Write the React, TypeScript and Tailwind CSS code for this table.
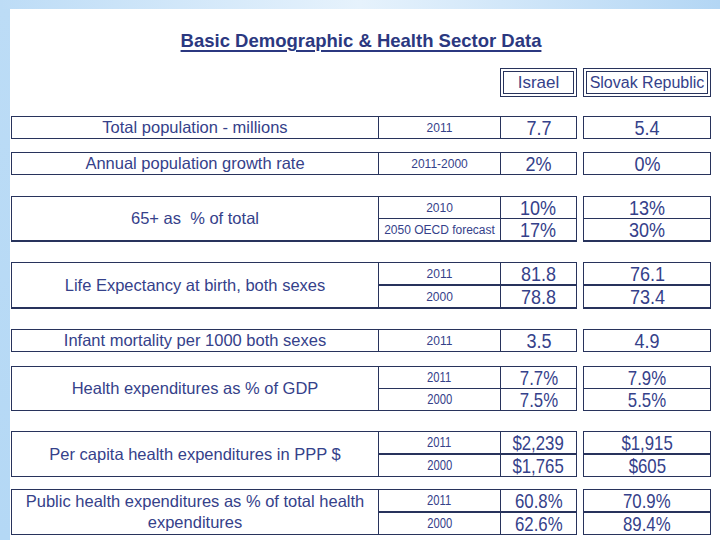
import React from 'react'

interface SubRow {
  year: string
  il: string
  sk: string
}

interface Group {
  label: React.ReactNode
  gap: string
  rows: SubRow[]
  split?: 'thin' | 'thick'
  bottom?: string
  condensed?: boolean
}

const groups: Group[] = [
  {
    label: 'Total population - millions',
    gap: 'mt-[19px]',
    rows: [{ year: '2011', il: '7.7', sk: '5.4' }]
  },
  {
    label: 'Annual population growth rate',
    gap: 'mt-[13px]',
    rows: [{ year: '2011-2000', il: '2%', sk: '0%' }]
  },
  {
    label: '65+ as  % of total',
    gap: 'mt-[21px]',
    split: 'thin',
    bottom: 'border-b-2',
    rows: [
      { year: '2010', il: '10%', sk: '13%' },
      { year: '2050 OECD forecast', il: '17%', sk: '30%' }
    ]
  },
  {
    label: 'Life Expectancy at birth, both sexes',
    gap: 'mt-[20px]',
    split: 'thick',
    bottom: 'border-b-2',
    rows: [
      { year: '2011', il: '81.8', sk: '76.1' },
      { year: '2000', il: '78.8', sk: '73.4' }
    ]
  },
  {
    label: 'Infant mortality per 1000 both sexes',
    gap: 'mt-[20px]',
    rows: [{ year: '2011', il: '3.5', sk: '4.9' }]
  },
  {
    label: 'Health expenditures as % of GDP',
    gap: 'mt-[14px]',
    split: 'thin',
    condensed: true,
    rows: [
      { year: '2011', il: '7.7%', sk: '7.9%' },
      { year: '2000', il: '7.5%', sk: '5.5%' }
    ]
  },
  {
    label: 'Per capita health expenditures in PPP $',
    gap: 'mt-[20px]',
    split: 'thick',
    condensed: true,
    rows: [
      { year: '2011', il: '$2,239', sk: '$1,915' },
      { year: '2000', il: '$1,765', sk: '$605' }
    ]
  },
  {
    label: (
      <>
        Public health expenditures as % of total health
        <br />
        expenditures
      </>
    ),
    gap: 'mt-[12px]',
    split: 'thick',
    condensed: true,
    rows: [
      { year: '2011', il: '60.8%', sk: '70.9%' },
      { year: '2000', il: '62.6%', sk: '89.4%' }
    ]
  }
]

const line = 'border-[#28335c]'

function rowClass(g: Group, i: number) {
  if (i === 0) return 'h-[21px]'
  return g.split === 'thick' ? `h-[23px] border-t-2 ${line}` : `h-[22px] border-t ${line}`
}

function Value({ v, condensed }: { v: string; condensed?: boolean }) {
  return (
    <span className={`inline-block ${condensed ? 'text-[21px] scale-x-[0.8]' : 'text-[20px] scale-x-[0.9]'}`}>
      {v}
    </span>
  )
}

function DataGroup({ g }: { g: Group }) {
  return (
    <div className={`flex ${g.gap}`}>
      <div className={`flex w-[566px] border ${g.bottom ?? ''} ${line}`}>
        <div className="w-[366px] flex items-center justify-center text-center text-[16.5px] leading-[21px] whitespace-pre">
          {g.label}
        </div>
        <div className={`flex-1 flex flex-col border-l ${line}`}>
          {g.rows.map((r, i) => (
            <div key={i} className={`flex ${rowClass(g, i)}`}>
              <div className="w-[121px] flex items-center justify-center">
                {g.condensed ? (
                  <span className="inline-block text-[15px] scale-x-[0.75]">{r.year}</span>
                ) : (
                  <span className="text-[12px]">{r.year}</span>
                )}
              </div>
              <div className={`flex-1 flex items-center justify-center border-l ${line}`}>
                <Value v={r.il} condensed={g.condensed} />
              </div>
            </div>
          ))}
        </div>
      </div>
      <div className={`ml-[6px] w-[128px] flex flex-col border ${g.bottom ?? ''} ${line}`}>
        {g.rows.map((r, i) => (
          <div key={i} className={`flex items-center justify-center ${rowClass(g, i)}`}>
            <Value v={r.sk} condensed={g.condensed} />
          </div>
        ))}
      </div>
    </div>
  )
}

export default function App() {
  return (
    <div className="w-[720px] h-[540px] flex flex-col overflow-hidden bg-[#b9dbf6] font-['Liberation_Sans',Arial,sans-serif] text-[#35418a]">
      <div className="h-[9px] bg-gradient-to-r from-[#bddcf6] via-[#e6f2fc] to-[#b3d6f4]" />
      <div className="flex flex-1">
        <div className="w-[10px] bg-gradient-to-b from-[#bcdcf6] to-[#b4d8f5]" />
        <div className="flex-1 bg-white pl-[1px]">
          <div className="pt-[21px] pr-[9px] text-center">
            <h1 className="inline-block text-[18.5px] leading-[22px] font-bold text-[#2b3880] underline decoration-2 underline-offset-[3px]">
              Basic Demographic &amp; Health Sector Data
            </h1>
          </div>

          <div className="flex mt-[14px]">
            <div className="w-[489px]" />
            <div className={`w-[77px] h-[29px] flex items-center justify-center border-4 border-double ${line} text-[17px]`}>
              Israel
            </div>
            <div
              className={`ml-[6px] w-[128px] h-[29px] flex items-center justify-center border-4 border-double ${line} text-[16px] whitespace-nowrap`}
            >
              Slovak Republic
            </div>
          </div>

          {groups.map((g, i) => (
            <DataGroup key={i} g={g} />
          ))}
        </div>
      </div>
    </div>
  )
}
